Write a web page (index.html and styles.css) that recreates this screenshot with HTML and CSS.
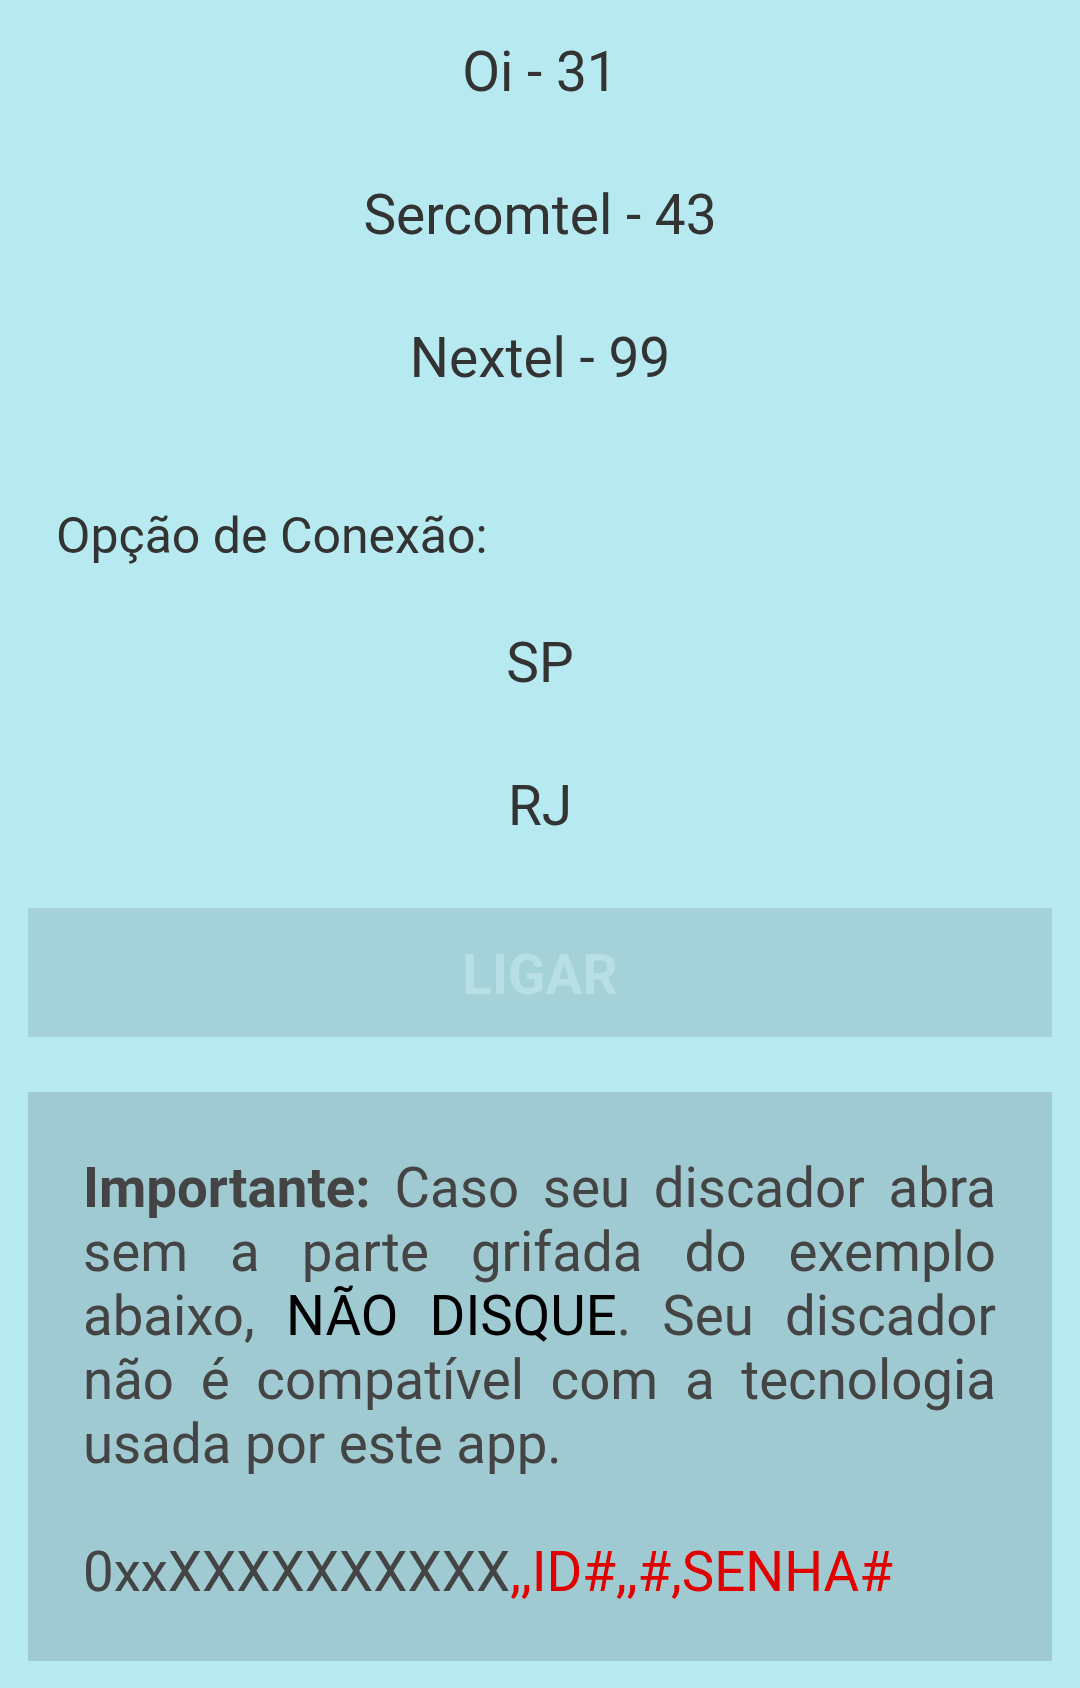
FILE: index.html
```html
<!DOCTYPE html>
<html lang="pt">
<head>
<meta charset="utf-8">
<title>Conexão</title>
<link rel="stylesheet" href="styles.css">
</head>
<body>
<main class="screen">
  <ul class="options">
    <li class="option">Oi - 31</li>
    <li class="option">Sercomtel - 43</li>
    <li class="option">Nextel - 99</li>
  </ul>
  <div class="label">Opção de Conexão:</div>
  <ul class="options">
    <li class="option">SP</li>
    <li class="option">RJ</li>
  </ul>
  <div class="btn-wrap">
    <button class="btn" disabled>LIGAR</button>
  </div>
  <section class="notice">
    <p class="notice-text"><b>Importante:</b> Caso seu discador abra sem a parte grifada do exemplo abaixo, <span class="strong">NÃO DISQUE</span>. Seu discador não é compatível com a tecnologia usada por este app.</p>
    <p class="example">0xxXXXXXXXXXX<span class="red">,,ID#,,#,SENHA#</span></p>
  </section>
</main>
</body>
</html>
```
FILE: styles.css
```css
html, body {
  margin: 0;
  padding: 0;
  background: #b7eaf0;
}
body {
  font-family: Roboto, "Noto Sans", sans-serif;
  color: #333333;
}
.screen {
  width: 1080px;
  min-height: 1688px;
  display: flex;
  flex-direction: column;
}
.options {
  list-style: none;
  margin: 0;
  padding: 0;
}
.option {
  height: 143px;
  display: flex;
  align-items: center;
  justify-content: center;
  font-size: 55px;
}
.label {
  font-size: 50px;
  line-height: 56px;
  padding: 79px 0 27px 56px;
}
.btn-wrap {
  padding: 31px 28px 0 28px;
}
.btn {
  display: block;
  width: 100%;
  height: 129px;
  border: 0;
  margin: 0;
  background: #a5d2d8;
  color: #b7dfe5;
  font-family: Roboto, "Noto Sans", sans-serif;
  font-weight: 700;
  font-size: 55px;
  padding: 4px 0 0 0;
}
.notice {
  margin: 55px 28px 0 28px;
  background: #a0cad1;
  padding: 64px 56px 57px 55px;
  color: #444444;
  font-size: 54.6px;
  line-height: 64px;
}
.notice-text {
  margin: 0;
  text-align: justify;
}
.notice-text b {
  font-weight: 700;
}
.strong {
  color: #000000;
}
.example {
  margin: 64px 0 0 0;
}
.red {
  color: #e00000;
}
```
